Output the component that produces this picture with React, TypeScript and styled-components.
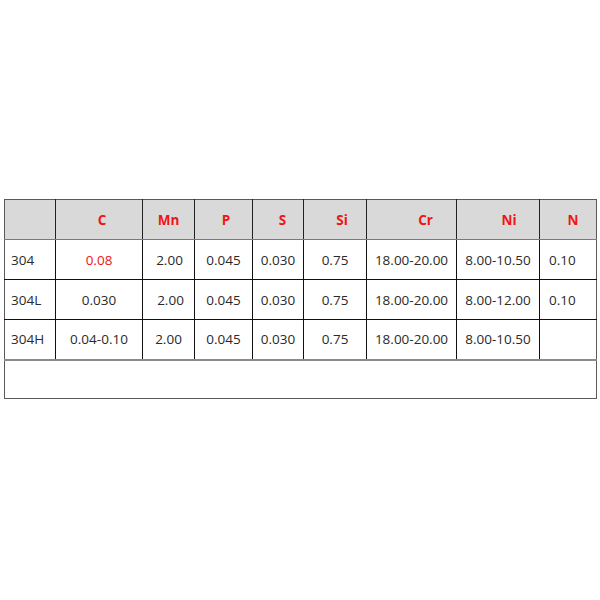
import React from "react";
import styled, { createGlobalStyle } from "styled-components";

const Global = createGlobalStyle`
  html, body { margin: 0; padding: 0; background: #fff; }
  body { font-family: "Open Sans", "Noto Sans", Arial, sans-serif; }
`;

const Page = styled.div`
  width: 600px;
  height: 600px;
  box-sizing: border-box;
  padding: 199px 0 0 4px;
`;

const Table = styled.table`
  border-collapse: collapse;
  table-layout: fixed;
  width: 592px;
  border: 1px solid #5a5a5a;
  font-size: 13.5px;
  color: #2a2a2a;
`;

const HeadRow = styled.tr`
  height: 40px;
  background: #d9d9d9;
`;

const Row = styled.tr<{ $last?: boolean }>`
  height: 40px;
  border-bottom: ${(p) => (p.$last ? "2px solid #8a8a8a" : "1px solid #111")};
`;

const Th = styled.th<{ $shift?: number }>`
  padding: 0 0 0 ${(p) => p.$shift ?? 0}px;
  border-left: 1px solid #222;
  border-bottom: 1px solid #7a7a7a;
  color: #f01515;
  font-weight: 700;
  font-size: 13.5px;
  text-align: center;
  &:first-child { border-left: none; }
`;

const Td = styled.td<{ $align?: "left" | "center"; $red?: boolean; $shift?: number }>`
  padding: 0 0 0 ${(p) => p.$shift ?? 0}px;
  border-left: 1px solid #111;
  text-align: ${(p) => p.$align ?? "center"};
  color: ${(p) => (p.$red ? "#f01515" : "#2a2a2a")};
  white-space: nowrap;
  &:first-child { border-left: none; padding-left: 6px; }
`;

const EmptyCell = styled.td`
  height: 37px;
  padding: 0;
`;

const widths = [51, 87, 52, 58, 51, 63, 90, 83, 57];

const headers: { label: string; shift: number }[] = [
  { label: "", shift: 0 },
  { label: "C", shift: 6 },
  { label: "Mn", shift: 0 },
  { label: "P", shift: 5 },
  { label: "S", shift: 9 },
  { label: "Si", shift: 14 },
  { label: "Cr", shift: 28 },
  { label: "Ni", shift: 22 },
  { label: "N", shift: 10 },
];

type Cell = { v: string; red?: boolean; shift?: number; align?: "left" | "center" };

const rows: Cell[][] = [
  [
    { v: "304", align: "left" },
    { v: "0.08", red: true, shift: 0 },
    { v: "2.00", shift: 2 },
    { v: "0.045" },
    { v: "0.030" },
    { v: "0.75" },
    { v: "18.00-20.00" },
    { v: "8.00-10.50" },
    { v: "0.10", align: "left", shift: 9 },
  ],
  [
    { v: "304L", align: "left" },
    { v: "0.030" },
    { v: "2.00", shift: 4 },
    { v: "0.045" },
    { v: "0.030" },
    { v: "0.75" },
    { v: "18.00-20.00" },
    { v: "8.00-12.00" },
    { v: "0.10", align: "left", shift: 9 },
  ],
  [
    { v: "304H", align: "left" },
    { v: "0.04-0.10" },
    { v: "2.00", shift: 0 },
    { v: "0.045" },
    { v: "0.030" },
    { v: "0.75" },
    { v: "18.00-20.00" },
    { v: "8.00-10.50" },
    { v: "", align: "left", shift: 9 },
  ],
];

export default function App() {
  return (
    <>
      <Global />
      <Page>
        <Table>
          <colgroup>
            {widths.map((w, i) => (
              <col key={i} style={{ width: w }} />
            ))}
          </colgroup>
          <thead>
            <HeadRow>
              {headers.map((h, i) => (
                <Th key={i} $shift={h.shift}>
                  {h.label}
                </Th>
              ))}
            </HeadRow>
          </thead>
          <tbody>
            {rows.map((r, i) => (
              <Row key={i} $last={i === rows.length - 1}>
                {r.map((c, j) => (
                  <Td key={j} $align={c.align} $red={c.red} $shift={c.shift}>
                    {c.v}
                  </Td>
                ))}
              </Row>
            ))}
            <tr>
              <EmptyCell colSpan={9} />
            </tr>
          </tbody>
        </Table>
      </Page>
    </>
  );
}
